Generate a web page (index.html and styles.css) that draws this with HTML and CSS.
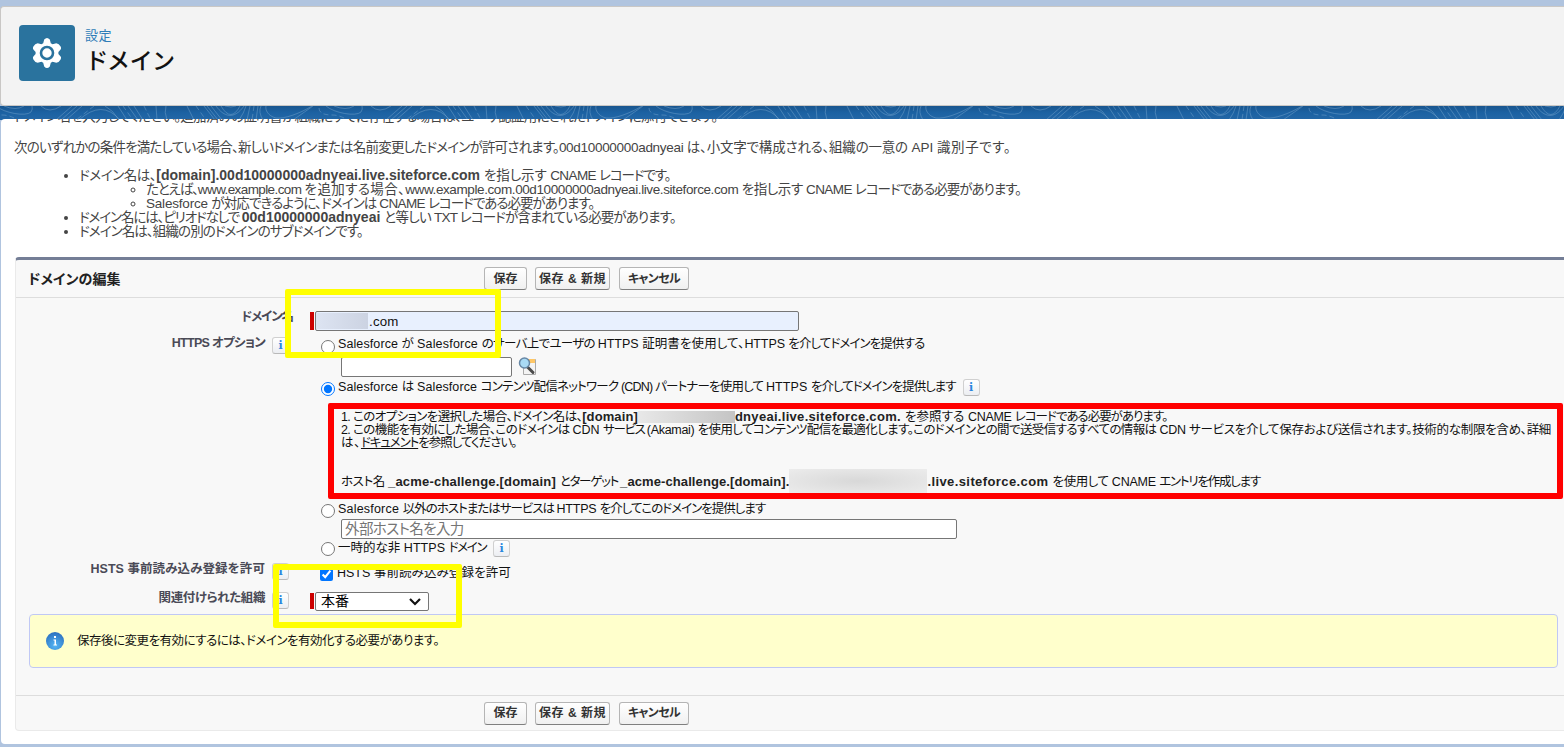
FILE: index.html
```html
<!doctype html>
<html lang="ja">
<head>
	<meta charset="UTF-8">
	<title>ドメイン</title>
	<link rel="stylesheet" href="styles.css">
</head>
<body>
	<div class="header">
		<div class="header-icon">
			<svg width="30" height="32" viewBox="0 0 30 32">
				<path d="M12.2 2.6 Q15 -.4 17.8 2.6 L18.8 6.2 L20.6 7.2 L24.3 6.3 Q27 6.6 28.6 9.6 Q29.6 11.6 28.4 12.8 L26.4 15 V17 L28.4 19.2 Q29.6 20.4 28.6 22.4 Q27 25.4 24.3 25.7 L20.6 24.8 L18.8 25.8 L17.8 29.4 Q15 32.4 12.2 29.4 L11.2 25.8 L9.4 24.8 L5.7 25.7 Q3 25.4 1.4 22.4 Q.4 20.4 1.6 19.2 L3.6 17 V15 L1.6 12.8 Q.4 11.6 1.4 9.6 Q3 6.6 5.7 6.3 L9.4 7.2 L11.2 6.2 Z" fill="#fff"/>
				<circle cx="15" cy="16" r="6" fill="none" stroke="#2a739e" stroke-width="2.6"/>
			</svg>
		</div>
		<div class="header-text">
			<p class="sub">設定</p>
			<h1>ドメイン</h1>
		</div>
	</div>
	<svg class="waves" width="1564" height="14">
		<defs>
			<linearGradient id="shade" x1="0" y1="0" x2="0" y2="1">
				<stop offset="0" stop-color="#19568f"/><stop offset=".5" stop-color="#1c62a3"/><stop offset="1" stop-color="#2467a6"/>
			</linearGradient>
			<pattern id="topo" x="174" y="0" width="330" height="14" patternUnits="userSpaceOnUse">
				<g fill="none" stroke="#6f9fca" stroke-opacity=".5">
					<path d="M13 0L20 14M30 0L41 14M33 0L44 14M37 0L48 14M42 0C50 11 60 14 70 0M47 0Q57 17 66 0M51 0Q57 2 62 0M72 0Q70 7 65 14M76 0L73 14M84 0L82 14"/>
					<path d="M87 0Q84 6 89 14M138 0C125 8 110 13 102 12C94 10 91 4 92 0M119 14Q132 5 139 0M152 0C160 7 182 11 187 6Q189 3 188 0M160 0Q172 5 180 0M197 0Q205 8 217 0"/>
					<path d="M228 0L212 14M233 0L217 14M238 0L222 14M235 14Q258 -7 276 14M261 0Q269 4 275 14M274 0L283 14M284 0L294 14M290 0L299 14M312 0L313 14M322 0Q320 6 323 14"/>
					<path stroke-dasharray="5 3" d="M22 0L32 14M80 0L78 14M145 2Q145 9 158 9Q165 9 172 13M250 0L232 14M279 0L289 14M300 0L307 14"/>
				</g>
			</pattern>
		</defs>
		<rect width="1564" height="14" fill="url(#shade)"/>
		<rect width="1564" height="14" fill="url(#topo)"/>
	</svg>
	<div class="content">
		<p class="cut t7">ドメイン名を入力してください。追加済みの証明書が組織にすでに存在する場合は、ユーザ認証用にされたドメインに添付できます。</p>
		<p class="lead"><span class="t8">次のいずれかの条件を満たしている場合、新しいドメインまたは名前変更したドメインが許可されます。</span><span class="t3">00d10000000adnyeai </span><span class="t2">は、小文字で構成される、組織の一意の </span>API <span class="w6">識別子です。</span></p>
		<ul class="rules">
			<li><span class="t4">ドメイン名は、</span><b>[domain].00d10000000adnyeai.live.siteforce.com </b><span class="t1">を指し示す </span><span class="t6">CNAME </span><span class="t11">レコードです。</span>
				<ul>
					<li><span class="t11">たとえば、</span><span class="t6">www.example.com </span><span class="w4">を追加する場合、</span><span class="t4">www.example.com.00d10000000adnyeai.live.siteforce.com </span><span class="t4">を指し示す </span><span class="t6">CNAME </span><span class="t10">レコードである必要があります。</span></li>
					<li><span class="t2">Salesforce </span><span class="t9">が対応できるように、ドメインは </span><span class="t6">CNAME </span><span class="t10">レコードである必要があります。</span></li>
				</ul>
			</li>
			<li><span class="t11">ドメイン名には、ピリオドなしで </span><b>00d10000000adnyeai </b><span class="t7">と等しい </span><span class="t8">TXT </span><span class="t9">レコードが含まれている必要があります。</span></li>
			<li><span class="t9">ドメイン名は、組織の別のドメインのサブドメインです。</span></li>
		</ul>

		<form class="block" onsubmit="return false">
			<div class="bar">
				<h2 class="w1">ドメインの編集</h2>
				<button class="btn btn-save">保存</button>
				<button class="btn btn-new"><span class="w5">保存 &amp; 新規</span></button>
				<button class="btn btn-cancel"><span class="t7">キャンセル</span></button>
			</div>
			<div class="fields">
				<div class="row row-name">
					<label class="noicon"><span class="t11">ドメイン名</span></label>
					<div class="required">
						<div class="domain"><span class="smudge smudge-name"></span>.com</div>
					</div>
				</div>
				<div class="row row-https">
					<label><span class="t7">HTTPS オプション</span><i class="info">i</i></label>
					<div>
						<div class="opt opt1"><input type="radio" name="https"><span class="w1">Salesforce </span><span class="t2">が </span><span class="w2">Salesforce </span><span class="t7">のサーバ上でユーザの </span><span>HTTPS </span><span class="w1">証明書を使用して、</span><span class="t1">HTTPS </span><span class="t9">を介してドメインを提供する</span></div>
						<div class="lookup"><input type="text" class="cert">
							<svg width="19" height="19" viewBox="0 0 19 19">
								<path d="M5.5 2.5h12v15h-12z" fill="#f4f4f4" stroke="#aaa"/>
								<path d="M10 2h7v4h-7z" fill="#ffc766"/>
								<path d="M9.5 10L15 15.5" stroke="#4a4a4a" stroke-width="3" stroke-linecap="round"/>
								<circle cx="6.5" cy="6" r="5" fill="#a9daf5" stroke="#6787a5" stroke-width="1.5"/>
							</svg>
						</div>
						<div class="opt opt2"><input type="radio" name="https" checked><span class="w1">Salesforce </span><span class="t3">は </span><span class="w1">Salesforce </span><span class="t8">コンテンツ配信ネットワーク (CDN) パートナーを使用して </span><span class="w1">HTTPS </span><span class="t10">を介してドメインを提供します</span><i class="info">i</i></div>
						<div class="note">
							<p><span class="t6">1. このオプションを選択した場合、ドメイン名は、</span><b class="w1">[domain]</b><span class="smudge smudge-id"></span><b class="w3">dnyeai.live.siteforce.com. </b><span class="w1">を参照する </span><span class="t3">CNAME </span><span class="t10">レコードである必要があります。</span></p>
							<p><span class="t6">2. この機能を有効にした場合、このドメインは </span>CDN <span class="t13">サービス </span><span class="t3">(Akamai) </span><span class="t6">を使用してコンテンツ配信を最適化します。このドメインとの間で送受信するすべての情報は </span><span class="t2">CDN </span><span class="t3">サービスを介して保存および送信されます。技術的な制限を含め、詳細</span></p>
							<p><span class="w6">は、</span><a href="#" class="t11">ドキュメント</a><span class="t10">を参照してください。</span></p>
							<p class="host"><span class="t4">ホスト名 </span><b class="w2">_acme-challenge.[domain] </b><span class="t13">とターゲット </span><b class="w1">_acme-challenge.[domain].</b><span class="smudge smudge-host"></span><b class="w4">.live.siteforce.com </b><span class="t4">を使用して </span><span class="t2">CNAME </span><span class="t12">エントリを作成します</span></p>
						</div>
						<div class="opt opt3"><input type="radio" name="https"><span class="w2">Salesforce </span><span class="t10">以外のホストまたはサービスは </span><span class="t2">HTTPS </span><span class="t10">を介してこのドメインを提供します</span></div>
						<input type="text" class="exthost" placeholder="外部ホスト名を入力">
						<div class="opt opt4"><input type="radio" name="https"><span>一時的な非 </span><span class="w1">HTTPS </span><span class="t14">ドメイン</span><i class="info">i</i></div>
					</div>
				</div>
				<div class="row row-hsts">
					<label><span>HSTS </span><span class="w1">事前読み込み登録を許可</span><i class="info">i</i></label>
					<div class="opt opt5"><input type="checkbox" checked><span>HSTS </span><span class="w1">事前読み込み登録を許可</span></div>
				</div>
				<div class="row row-org">
					<label><span class="t4">関連付けられた組織</span><i class="info">i</i></label>
					<div class="required">
						<select><option>本番</option></select>
						<svg class="arrow" width="14" height="9"><path d="M2 2L7 7L12 2" fill="none" stroke="#111" stroke-width="2.2"/></svg>
					</div>
				</div>
				<div class="message">
					<svg width="20" height="20" viewBox="0 0 20 20">
						<defs><radialGradient id="ball" cx=".5" cy=".75" r=".7"><stop offset="0" stop-color="#55b7f5"/><stop offset="1" stop-color="#2f74c2"/></radialGradient></defs>
						<circle cx="10" cy="10" r="9" fill="url(#ball)"/>
						<path d="M9 5h2v2h-2zM8.5 8.5h2.5v5h1v1h-3.5v-1h1v-4h-1z" fill="#fff"/>
					</svg>
					<span class="t5">保存後に変更を有効にするには、ドメインを有効化する必要があります。</span>
				</div>
			</div>
			<div class="bar bar-bottom">
				<button class="btn btn-save">保存</button>
				<button class="btn btn-new"><span class="w5">保存 &amp; 新規</span></button>
				<button class="btn btn-cancel"><span class="t7">キャンセル</span></button>
			</div>
		</form>
	</div>
	<div class="mark mark-name"></div>
	<div class="mark mark-org"></div>
	<div class="mark mark-note"></div>
</body>
</html>
```
FILE: styles.css
```css
*{margin:0; padding:0; box-sizing:border-box;}
body{
	height:747px;
	overflow:hidden;
	padding-top:6px;
	background:#b0c4df;
	font-family:"Liberation Sans","Noto Sans CJK JP",sans-serif;
	font-feature-settings:"palt";
	white-space:nowrap;
	color:#222;
}
i{font-style:normal;}

/*字間*/
.t1{letter-spacing:-.1px;}
.t2{letter-spacing:-.2px;}
.t3{letter-spacing:-.3px;}
.t4{letter-spacing:-.4px;}
.t5{letter-spacing:-.5px;}
.t6{letter-spacing:-.6px;}
.t7{letter-spacing:-.7px;}
.t8{letter-spacing:-.8px;}
.t9{letter-spacing:-.9px;}
.t10{letter-spacing:-1px;}
.t11{letter-spacing:-1.1px;}
.t12{letter-spacing:-1.2px;}
.t13{letter-spacing:-1.3px;}
.t14{letter-spacing:-1.4px;}
.w1{letter-spacing:.1px;}
.w2{letter-spacing:.2px;}
.w3{letter-spacing:.3px;}
.w4{letter-spacing:.4px;}
.w5{letter-spacing:.5px;}
.w6{letter-spacing:.6px;}

.header{
	display:flex;
	height:100px;
	padding:18px;
	border:1px solid #c9c7c5;
	border-right:0;
	border-radius:4px 0 0 4px;
	background:#f3f3f3;
}
.header-icon{
	display:flex;
	align-items:center;
	justify-content:center;
	width:56px;
	height:56px;
	border-radius:4px;
	background:#2a739e;
}
.header-text{padding-left:10px;}
.sub{font-size:13px; line-height:22px; letter-spacing:.5px; color:#2f7db8;}
h1{font-size:23px; line-height:28px; font-weight:500; letter-spacing:2.2px; color:#111; padding-left:3px;}

.waves{display:block; height:14px; margin-bottom:-1px;}

.content{
	position:relative;
	height:625px;
	margin-left:1px;
	padding-left:13px;
	overflow:hidden;
	border-radius:4px 0 0 4px;
	background:#fff;
	color:#444;
	font-size:13.5px;
}
.cut{height:21px; line-height:14px; margin-top:-9px;}
.lead{line-height:14px; padding-top:10px; height:38px;}
.rules{padding-left:65px; line-height:14px;}
.rules ul{padding-left:67px;}
.rules b{font-size:14px; line-height:13px;}

.block{
	margin-top:18px;
	margin-left:1px;
	height:474px;
	border-top:3px solid #747e96;
	border-left:1px solid #eaeaea;
	border-bottom:1px solid #eaeaea;
	border-radius:4px 0 0 4px;
	background:#f8f8f8;
	color:#111;
	font-size:12.5px;
}
.bar{
	display:flex;
	align-items:center;
	height:38px;
	border-bottom:1px solid #ddd;
}
.bar h2{
	width:468px;
	padding-left:12px;
	font-size:14px;
	line-height:18px;
	font-weight:700;
	color:#222;
}
.bar-bottom{
	height:35px;
	padding-left:468px;
	border-bottom:0;
	border-top:1px solid #ddd;
}
.btn{
	height:23px;
	margin-right:8px;
	border:1px solid #b5b5b5;
	border-bottom-color:#7f7f7f;
	border-radius:3px;
	background:linear-gradient(#fff,#f0f0f0);
	font:bold 12px/18px "Liberation Sans","Noto Sans CJK JP",sans-serif;
	font-feature-settings:"palt";
	color:#333;
}
.btn-save{width:43px;}
.btn-new{width:75px;}
.btn-cancel{width:70px; margin-left:1px;}

.fields{height:397px; padding-top:13px;}
.row{
	display:grid;
	grid-template-columns:273px 1fr;
	column-gap:21px;
}
.row label{
	display:flex;
	justify-content:flex-end;
	white-space:pre;
	font-weight:bold;
	color:#4a4a56;
	line-height:13px;
}
.row .noicon{margin-right:-4px;}
.row-name{height:20px;}
.row-https{height:226px;}
.row-https label{padding-top:6px;}
.row-hsts{height:32px;}
.row-hsts label{padding-top:6px;}
.row-org{height:25px;}
.row-org label{padding-top:3px;}

.info{
	display:inline-block;
	width:17px;
	height:17px;
	margin-left:7px;
	border:1px solid #d0d0d0;
	border-bottom-color:#b9b9b9;
	border-radius:3px;
	background:linear-gradient(#fff,#eceef2);
	font:bold 11px/15px "DejaVu Serif",serif;
	text-align:center;
	color:#2a86de;
}
.required{
	position:relative;
	display:flex;
	padding-left:1px;
	border-left:4px solid #c00;
	height:18px;
	margin-top:1px;
}
.row-org .required{height:16px; margin-top:4px;}
.domain{
	display:flex;
	align-items:center;
	width:484px;
	height:20px;
	margin-top:-1px;
	border:1px solid #767676;
	border-radius:2px;
	background:#e8f0fe;
	font-size:13.3px;
	letter-spacing:.2px;
}
input[type=text]{
	display:block;
	height:20px;
	margin-left:31px;
	padding:0 3px;
	border:1px solid #767676;
	border-radius:2px;
	background:#fff;
	font:14.5px "Liberation Sans","Noto Sans CJK JP",sans-serif;
	font-feature-settings:"palt";
	letter-spacing:-.6px;
}
.lookup{display:flex;}
.cert{width:171px;}
.lookup svg{margin-left:6px;}
.exthost{width:616px;}

.opt{
	display:flex;
	align-items:center;
	height:20px;
	line-height:18px;
	white-space:pre;
}
.opt input{width:14px; height:14px; margin:4px 3px 0 11px;}
.opt1{height:26px;}
.opt1 input{margin-top:6px;}
.opt4{height:18px;}
.opt4 input{margin-top:2px;}
.opt5{height:32px;}
.opt5 input{width:13px; height:13px; margin:3px 4px 0 10px;}

.note{
	height:102px;
	padding:14px 0 0 31px;
	line-height:13px;
}
.note a{color:#111;}
.note b{font-size:13px; line-height:12px; color:#222;}
.host{padding-top:26px;}

.smudge{display:inline-block;}
.smudge-name{width:52px; height:16px; margin-right:1px; background:linear-gradient(90deg,#dde4f2,#ccd3e2);}
.smudge-id{width:97px; height:12px; vertical-align:top; background:linear-gradient(90deg,#e8e8e8,#c4c4c4);}
.smudge-host{width:138px; height:24px; margin:-8px 0 -4px; vertical-align:middle; background:radial-gradient(#d8d8d8,#ececec);}

select{
	width:114px;
	height:19px;
	margin-top:-1px;
	padding-left:5px;
	border:1px solid #767676;
	border-radius:2px;
	background:#fff;
	appearance:none;
	font:14px/17px "Liberation Sans","Noto Sans CJK JP",sans-serif;
}
.arrow{position:absolute; left:94px; top:4px;}

.message{
	display:flex;
	align-items:center;
	width:1529px;
	height:54px;
	line-height:18px;
	margin-left:13px;
	padding-left:15px;
	border:1px solid #c0c8f5;
	border-radius:4px;
	background:#ffc;
}
.message span{margin-left:12px;}

/*枠*/
.mark{position:absolute; border:6px solid #ff0; border-radius:2px;}
.mark-name{left:285px; top:289px; width:216px; height:69px;}
.mark-org{left:273px; top:564px; width:189px; height:64px;}
.mark-note{left:328px; top:403px; width:1235px; height:96px; border-color:#f00;}
```
